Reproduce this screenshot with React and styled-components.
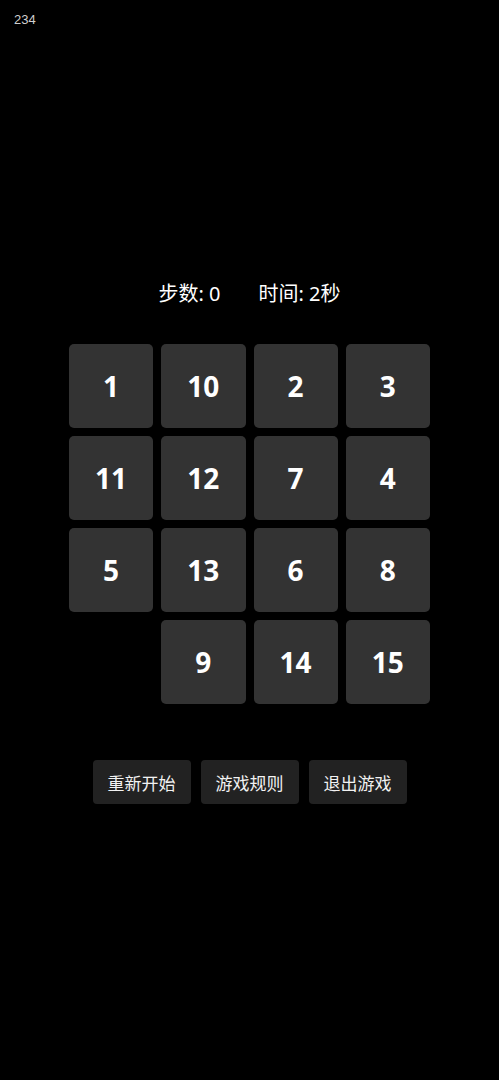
import React, { useState } from "react";
import styled, { createGlobalStyle } from "styled-components";

const GlobalStyle = createGlobalStyle`
  html, body {
    margin: 0;
    padding: 0;
    background-color: #000;
  }
  body {
    font-family: "Noto Sans", "Noto Sans CJK SC", sans-serif;
    color: #fff;
  }
`;

const Page = styled.div`
  min-height: 1080px;
  background-color: #000;
`;

const Counter = styled.div`
  padding: 12px 14px 0;
  font-family: "Liberation Sans", Arial, sans-serif;
  font-size: 13px;
  color: #cfcfcf;
`;

const Game = styled.main`
  display: flex;
  flex-direction: column;
  align-items: center;
  padding-top: 253px;
`;

const Stats = styled.div`
  display: flex;
  gap: 38px;
  font-size: 20px;
  line-height: 28px;
  color: #fff;
`;

const Board = styled.div`
  display: grid;
  grid-template-columns: repeat(4, 84.25px);
  grid-auto-rows: 84px;
  gap: 8px;
  margin-top: 36px;
`;

const Tile = styled.div`
  display: flex;
  align-items: center;
  justify-content: center;
  border-radius: 5px;
  background-color: ${(props) => (props.empty ? "transparent" : "#333333")};
  font-size: 28px;
  font-weight: 700;
  color: #fff;
`;

const Actions = styled.div`
  display: flex;
  gap: 10px;
  margin-top: 56px;
`;

const Button = styled.button`
  height: 44px;
  padding: 0 15px;
  border: 0;
  border-radius: 4px;
  background-color: #222222;
  color: #f2f2f2;
  font-family: "Noto Sans CJK SC", sans-serif;
  font-size: 17px;
`;

const tiles = [1, 10, 2, 3, 11, 12, 7, 4, 5, 13, 6, 8, 0, 9, 14, 15];

function App() {
  const [steps] = useState(0);
  const [seconds] = useState(2);

  return (
    <Page>
      <GlobalStyle />
      <Counter>234</Counter>
      <Game>
        <Stats>
          <span>步数: {steps}</span>
          <span>时间: {seconds}秒</span>
        </Stats>
        <Board>
          {tiles.map((n) => (
            <Tile key={n} empty={n === 0}>
              {n === 0 ? "" : n}
            </Tile>
          ))}
        </Board>
        <Actions>
          <Button>重新开始</Button>
          <Button>游戏规则</Button>
          <Button>退出游戏</Button>
        </Actions>
      </Game>
    </Page>
  );
}

export default App;
